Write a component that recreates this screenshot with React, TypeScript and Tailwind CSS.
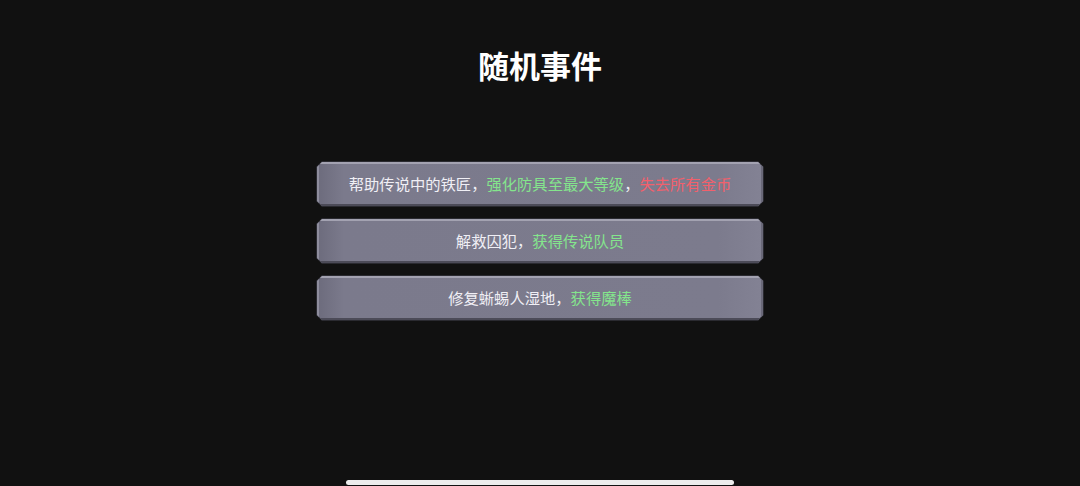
import React from 'react';

type Part = { text: string; tone: 'plain' | 'good' | 'bad' };

const EVENTS: Part[][] = [
  [
    { text: '帮助传说中的铁匠，', tone: 'plain' },
    { text: '强化防具至最大等级', tone: 'good' },
    { text: '，', tone: 'plain' },
    { text: '失去所有金币', tone: 'bad' },
  ],
  [
    { text: '解救囚犯，', tone: 'plain' },
    { text: '获得传说队员', tone: 'good' },
  ],
  [
    { text: '修复蜥蜴人湿地，', tone: 'plain' },
    { text: '获得魔棒', tone: 'good' },
  ],
];

const TONE = {
  plain: 'text-[#f0eff5]',
  good: 'text-[#84e58c]',
  bad: 'text-[#f2606c]',
};

function EventButton({ parts }: { parts: Part[] }) {
  return (
    <div className="w-[448px] h-[46px] bg-[#2a2a30] [clip-path:polygon(6px_0,calc(100%-6px)_0,100%_6px,100%_calc(100%-6px),calc(100%-6px)_100%,6px_100%,0_calc(100%-6px),0_6px)] p-px">
      <button
        className="w-full h-full flex items-center justify-center bg-[linear-gradient(90deg,#6c6b7c_0%,#7b7a8c_6%,#7c7b8d_90%,#838294_100%)] shadow-[inset_0_2px_0_#a3a2b1,inset_0_-2px_0_#4c4b58,inset_2px_0_0_#8e8d9d,inset_-2px_0_0_#6a6979] [clip-path:polygon(5px_0,calc(100%-5px)_0,100%_5px,100%_calc(100%-5px),calc(100%-5px)_100%,5px_100%,0_calc(100%-5px),0_5px)] text-[15.3px] leading-none"
      >
        {parts.map((p, i) => (
          <span key={i} className={TONE[p.tone]}>
            {p.text}
          </span>
        ))}
      </button>
    </div>
  );
}

export default function App() {
  return (
    <div className="w-[1080px] h-[486px] bg-[#111111] flex flex-col items-center font-['Noto_Sans_CJK_SC','Noto_Sans',sans-serif] overflow-hidden">
      <h1 className="mt-[45px] text-[31px] leading-[40px] font-bold text-white">随机事件</h1>

      <div className="mt-[76px] flex flex-col gap-[11px]">
        {EVENTS.map((parts, i) => (
          <EventButton key={i} parts={parts} />
        ))}
      </div>

      <div className="mt-auto mb-[1px] w-[388px] h-[5px] rounded-full bg-[#ececec]" />
    </div>
  );
}
